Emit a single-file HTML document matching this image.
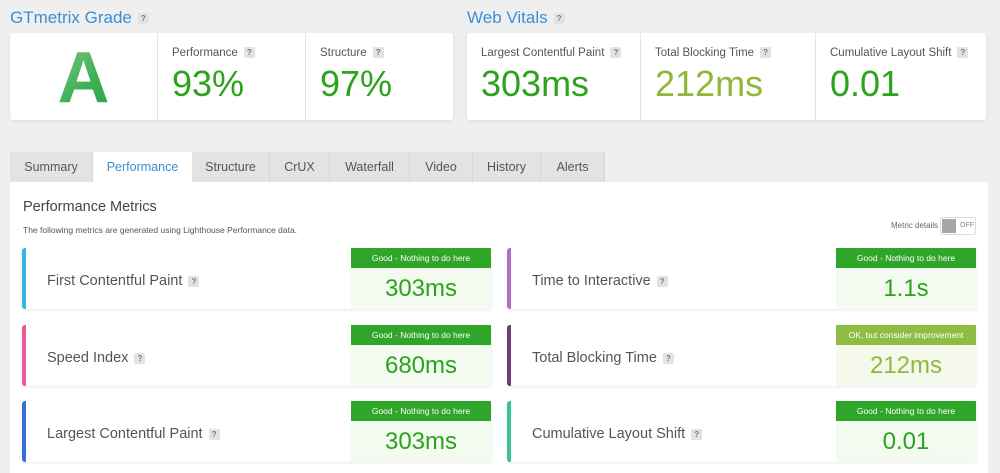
<!DOCTYPE html><html><head><style>
*{box-sizing:border-box;margin:0;padding:0}
body{width:1000px;height:473px;overflow:hidden;background:#efefef;font-family:"Liberation Sans",sans-serif;color:#444;position:relative}
.a{position:absolute}
.q{display:inline-block;width:11px;height:11px;background:#e2e2e2;color:#777;font-size:8px;text-align:center;line-height:11px;border-radius:2px;vertical-align:middle;margin-left:6px;font-weight:bold}
.h{color:#3a8fd6;font-size:17px}
.card{background:#fff;border-radius:3px;box-shadow:0 1px 3px rgba(0,0,0,.08)}
.sec{position:absolute;top:0;height:87px;border-left:1px solid #e4e4e4}
.sec .l{position:absolute;left:14px;top:14px;font-size:11.5px;color:#555}
.sec .v{position:absolute;left:14px;top:30px;font-size:36px;color:#2ba31a}
.tab{position:absolute;top:152px;height:30px;background:#e3e3e3;border-right:1px solid #d6d6d6;font-size:12.5px;color:#555;text-align:center;line-height:30px}
.m{position:absolute;background:#fff;height:61px;width:469px;border-radius:3px;box-shadow:0 1px 3px rgba(0,0,0,.09);border-left:4px solid}
.m .t{position:absolute;left:21px;top:25px;font-size:14.5px;color:#555}
.b{position:absolute;right:0;top:0;width:140px;height:61px;background:#f3faf0}
.b .hd{height:20px;background:#2fa52a;color:#fff;font-size:8.5px;text-align:center;line-height:20px}
.b .n{text-align:center;font-size:24px;color:#2ba31a;line-height:41px}
.A{background:linear-gradient(135deg,#a8dcae,#3fae55 55%,#1f9a3c);-webkit-background-clip:text;background-clip:text;color:transparent}
</style></head><body>
<div class="a h" style="left:10px;top:8px">GTmetrix Grade<span class="q">?</span></div>
<div class="a h" style="left:467px;top:8px">Web Vitals<span class="q">?</span></div>
<div class="a card" style="left:10px;top:33px;width:443px;height:87px">
 <div class="a A" style="left:0;top:5px;width:147px;text-align:center;font-size:72px;font-weight:bold;line-height:80px">A</div>
 <div class="sec" style="left:147px;width:148px"><div class="l">Performance<span class="q">?</span></div><div class="v">93%</div></div>
 <div class="sec" style="left:295px;width:148px"><div class="l">Structure<span class="q">?</span></div><div class="v">97%</div></div>
</div>
<div class="a card" style="left:467px;top:33px;width:519px;height:87px">
 <div class="sec" style="left:0;width:173px;border:none"><div class="l">Largest Contentful Paint<span class="q">?</span></div><div class="v">303ms</div></div>
 <div class="sec" style="left:173px;width:175px"><div class="l">Total Blocking Time<span class="q">?</span></div><div class="v" style="color:#8fb83a">212ms</div></div>
 <div class="sec" style="left:348px;width:171px"><div class="l">Cumulative Layout Shift<span class="q">?</span></div><div class="v">0.01</div></div>
</div>
<div class="tab" style="left:10px;width:83px">Summary</div>
<div class="tab" style="left:93px;width:99px;background:#fff;color:#3a8fd6;border:none">Performance</div>
<div class="tab" style="left:192px;width:78px">Structure</div>
<div class="tab" style="left:270px;width:60px">CrUX</div>
<div class="tab" style="left:330px;width:80px">Waterfall</div>
<div class="tab" style="left:410px;width:63px">Video</div>
<div class="tab" style="left:473px;width:68px">History</div>
<div class="tab" style="left:541px;width:64px">Alerts</div>
<div class="a" style="left:10px;top:182px;width:978px;height:291px;background:#fff"></div>
<div class="a" style="left:23px;top:199px;font-size:14.5px;color:#444">Performance Metrics</div>
<div class="a" style="left:23px;top:225px;font-size:8.5px;color:#555">The following metrics are generated using Lighthouse Performance data.</div>
<div class="a" style="left:891px;top:221px;font-size:8px;color:#666">Metric details</div>
<div class="a" style="left:940px;top:217px;width:36px;height:18px;border:1px solid #ddd;border-radius:2px;background:#fff"><div style="position:absolute;left:1px;top:1px;width:14px;height:14px;background:#a6a6a6"></div><div style="position:absolute;left:19px;top:4px;font-size:7px;color:#888">OFF</div></div>

<div class="m" style="left:22px;top:248px;border-color:#39b3e6"><div class="t">First Contentful Paint<span class="q">?</span></div><div class="b"><div class="hd">Good - Nothing to do here</div><div class="n">303ms</div></div></div>
<div class="m" style="left:22px;top:325px;border-color:#e55c96"><div class="t">Speed Index<span class="q">?</span></div><div class="b"><div class="hd">Good - Nothing to do here</div><div class="n">680ms</div></div></div>
<div class="m" style="left:22px;top:401px;border-color:#3b6fd8"><div class="t">Largest Contentful Paint<span class="q">?</span></div><div class="b"><div class="hd">Good - Nothing to do here</div><div class="n">303ms</div></div></div>
<div class="m" style="left:507px;top:248px;border-color:#b06ec8"><div class="t">Time to Interactive<span class="q">?</span></div><div class="b"><div class="hd">Good - Nothing to do here</div><div class="n">1.1s</div></div></div>
<div class="m" style="left:507px;top:325px;border-color:#6d3f72"><div class="t">Total Blocking Time<span class="q">?</span></div><div class="b" style="background:#f5f9ec"><div class="hd" style="background:#8fbd44">OK, but consider improvement</div><div class="n" style="color:#8fb83a">212ms</div></div></div>
<div class="m" style="left:507px;top:401px;border-color:#3cc29a"><div class="t">Cumulative Layout Shift<span class="q">?</span></div><div class="b"><div class="hd">Good - Nothing to do here</div><div class="n">0.01</div></div></div>
</body></html>
